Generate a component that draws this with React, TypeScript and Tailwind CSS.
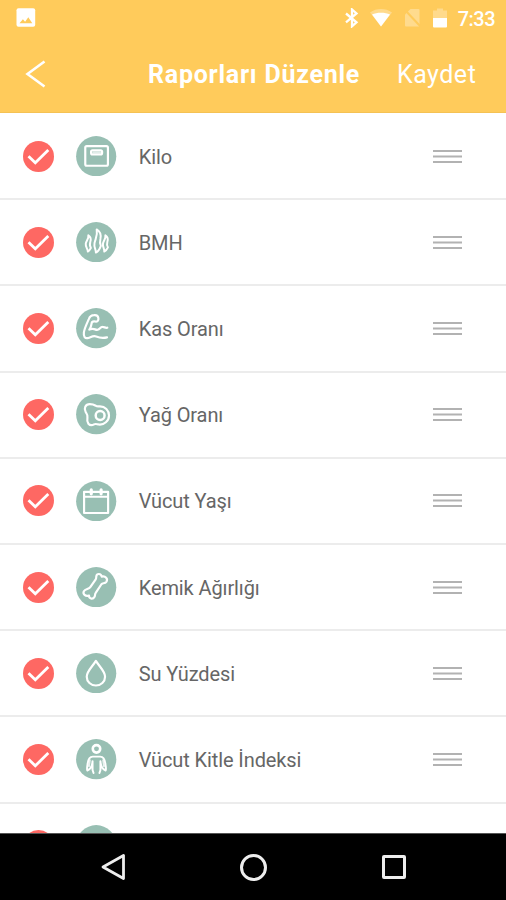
import type { ReactNode } from 'react'

type Report = {
  name: string
  icon: ReactNode
}

const reports: Report[] = [
  {
    name: 'Kilo',
    icon: (
      <>
        <rect x="9.4" y="10.2" width="23" height="20" rx="1.5" />
        <rect x="15.300" y="14.500" width="11.200" height="4.200" rx="1.5" />
        <path d="M17.500 16.600h7" strokeWidth="2" opacity=".7" />
      </>
    ),
  },
  {
    name: 'BMH',
    icon: (
      <g strokeWidth="2">
        <path d="M21 7.500c4.300 2.500 4.500 6 3.800 9.500c-.8 3.200-.6 5 .4 7.300c-1.200 3.500-3 5.800-5 6.700c0-3.500-2.300-5.500-1.400-9.700c1-4.500 3.400-7.500 2.200-13.800z" />
        <path d="M12.500 13.500c3 2 2.800 4.500 2 6.800c-.7 2.700-.5 4.500 .6 6c-1 1.800-1.800 3-3.100 3.700c.2-2.500-2.600-4.500-2.100-8c.5-3.300 3.300-5 2.600-8.500z" />
        <path d="M29.800 13.500c3 2 2.800 4.500 2 6.800c-.7 2.700-.5 4 .6 5.500c-1 2.200-2.200 3.600-3.700 4.200c.4-2.700-1.900-4.500-1.300-8c.5-3.300 3.100-5 2.400-8.500z" />
      </g>
    ),
  },
  {
    name: 'Kas Oranı',
    icon: (
      <path d="M16 14.500c2-1.700 3.500-.6 4.500-.6c1.800 0 2.400-1.900 2.200-3.700c-.3-2.400-2-3.200-4.500-2.900c-3 0-4 1-5.200 4c-2.200 5-4.500 9.500-5 13.500c-.5 4 1 6.700 4.500 5.600c3-1 5-2.600 8-1.500c3.500 1.500 6.500 2 11 .9M16.500 14c-1.500 2.500-.5 5-3 8M14.500 21.700c4-1.700 5 1 7.500 .4c2.500-.6 2.500-3 5-2.900c1.800 0 2.800 1.300 4.800 .8" />
    ),
  },
  {
    name: 'Yağ Oranı',
    icon: (
      <>
        <path d="M14 10.300c-4.500 0-6.300 4.600-4.200 8c1 1.700 2.200 2.700 1.800 5.200c-.4 2.500-.6 4.500 1 6.700c1.700 1.900 4.100 1.600 5.700 .6c1.400-.8 2.700-.2 4.500 .1c5.800 .8 10.700-3.600 10.700-9.100c0-5.200-4-9.300-9.400-9.200c-2 0-2.800 .3-4-.7c-1.700-1-3-1.600-6.100-1.600z" />
        <circle cx="24.500" cy="21.800" r="4.500" strokeWidth="2.500" />
      </>
    ),
  },
  {
    name: 'Vücut Yaşı',
    icon: (
      <>
        <path d="M8.200 11h24.400v21.500H8.200zM8.200 16h24.400" />
        <path d="M15.500 9v4M25.500 9v4" strokeWidth="3.200" />
      </>
    ),
  },
  {
    name: 'Kemik Ağırlığı',
    icon: (
      <path d="M14.500 20.500L20 12.500c.7-1 .5-2 .6-3c.5-3.200 4.800-3.200 5.500 .3c3.800-1 6.700 2.300 4.700 5.200c-1.500 2-3.800 1-5 2.500L20 26.200c-1 1.300-.3 2.500-1.300 4.200c-1.700 3-5.800 1.700-5.500-1.500c-3.600 1.200-6.700-1.500-5.200-4.200c1.500-2.700 5-1.900 6.500-4.200z" />
    ),
  },
  {
    name: 'Su Yüzdesi',
    icon: (
      <path d="M20.200 8c3.500 5.800 9.300 10.500 9.300 16c0 5.200-4.200 9-9.300 9s-9.300-3.800-9.300-9c0-5.500 5.800-10.200 9.300-16z" />
    ),
  },
  {
    name: 'Vücut Kitle İndeksi',
    icon: (
      <>
        <circle cx="20.800" cy="10" r="3.800" strokeWidth="2.600" />
        <path d="M17 17.900c-3.500 0-4.700 3-5.200 7.100c-.3 3-1 5-.3 7c3-1.200 5-4.500 5.300-9.500M24.600 17.900c3.500 0 4.700 3 5.200 7.100c.3 3 1 5 .3 7c-3-1.200-5-4.500-5.300-9.500M17 17.900h7.600M16.800 22.500V31.500l1 3M24.800 22.500V31.500l-1 3" strokeWidth="2" />
        <path d="M14 21.500l-.8 6M27.600 21.500l.8 6" strokeWidth="2" opacity=".8" />
      </>
    ),
  },
]

function StatusBar() {
  return (
    <div className="flex h-9 items-center justify-between pl-4 pr-[11px] text-white">
      <svg className="size-5" viewBox="0 0 20 20" aria-hidden="true">
        <rect x=".5" y=".2" width="18.700" height="18.500" rx="2" fill="currentColor" />
        <path d="M3.500 15.200l3.400-4 2.200 2.500 3.200-4.400 4 5.900z" fill="#ffcb5b" />
      </svg>
      <div className="flex items-center">
        <svg className="mr-[11px] h-5 w-[14px]" viewBox="0 0 14 20" fill="none" stroke="currentColor" strokeWidth="2.300" aria-hidden="true">
          <path d="M1 5.500l10.500 8.800-4.500 4V1.500l4.500 4L1 14.300" />
        </svg>
        <svg className="mr-3 h-5 w-[22px]" viewBox="0 0 22 20" fill="currentColor" aria-hidden="true">
          <path d="M0 4.500c6.500-4.600 15.500-4.600 22 0L11 18.500z" opacity=".3" />
          <path d="M2 6.500c5-2.500 13-2.500 18 0L11 18.500z" />
        </svg>
        <svg className="mr-3 h-5 w-[17px]" viewBox="0 0 17 20" aria-hidden="true">
          <path d="M6.500 1H14.500a1 1 0 0 1 1 1V18.500H2a1 1 0 0 1-1-1V6.500z" fill="#ffdb8e" />
          <path d="M.5 1.500l16 17" stroke="#ffcb5b" strokeWidth="2" />
        </svg>
        <svg className="mr-[11px] h-5 w-[14px]" viewBox="0 0 14 20" fill="currentColor" aria-hidden="true">
          <path d="M0 2.500h4V.5h6v2h4v8H0z" opacity=".3" />
          <path d="M0 10h14v8.500a1 1 0 0 1-1 1H1a1 1 0 0 1-1-1z" />
        </svg>
        <span className="pt-px text-[20px] leading-5 font-medium tracking-[-0.5px]">7:33</span>
      </div>
    </div>
  )
}

function Header() {
  return (
    <header className="h-[113px] shrink-0 border-b border-[#f5c254] bg-[#ffcb5b]">
      <StatusBar />
      <div className="flex h-[77px] items-center whitespace-nowrap text-white">
        <svg className="ml-[25px] h-7 w-[22px] -translate-y-px" viewBox="0 0 22 28" fill="none" stroke="currentColor" strokeWidth="2.600" aria-hidden="true">
          <path d="M19.500 1.500L2.500 14l17 12.500" />
        </svg>
        <h1 className="ml-[101px] w-[249px] text-[25px] font-bold tracking-[0.75px]">Raporları Düzenle</h1>
        <button className="text-[25px] tracking-[0.5px]">Kaydet</button>
      </div>
    </header>
  )
}

function ReportRow({ name, icon }: Partial<Report>) {
  return (
    <li className="flex h-[86.2px] shrink-0 items-center border-b-2 border-[#ececec] pl-[23px] pr-11">
      <svg className="size-[31px]" viewBox="0 0 31 31" fill="none" aria-hidden="true">
        <circle cx="15.500" cy="15.500" r="15.500" fill="#fe6863" />
        <path d="M5.500 15.200l6.800 6.600L25.300 9" stroke="white" strokeWidth="2.800" />
      </svg>
      <svg
        className="ml-[22.300px] size-[40.400px]"
        viewBox="0 0 41 41"
        fill="none"
        stroke="white"
        strokeWidth="2.200"
        strokeLinejoin="round"
        strokeLinecap="round"
        aria-hidden="true"
      >
        <circle cx="20.500" cy="20.500" r="20.400" fill="#98bfb3" stroke="none" />
        {icon}
      </svg>
      <span className="ml-[22px] grow pt-px text-xl tracking-[-0.1px] text-[#666666]">{name}</span>
      <svg className="h-[15px] w-[29px]" viewBox="0 0 29 15" fill="none" stroke="#b2b2b2" strokeWidth="2.200" aria-hidden="true">
        <path d="M0 2h29M0 7.500h29M0 13h29" />
      </svg>
    </li>
  )
}

function NavigationBar() {
  return (
    <nav className="flex h-[67px] shrink-0 items-center border-t border-[#555555] bg-black pl-[101px] text-[#eeeeee]">
      <svg className="h-7 w-[26px]" viewBox="0 0 26 28" fill="none" stroke="currentColor" strokeWidth="2.800" strokeLinejoin="round" aria-hidden="true">
        <path d="M22.500 2.500v23L2 14z" />
      </svg>
      <div className="ml-[113px] size-[27px] rounded-full border-[3px] border-current"></div>
      <div className="ml-[115px] size-[24px] rounded-[2px] border-[3px] border-current"></div>
    </nav>
  )
}

export default function App() {
  return (
    <div className="flex h-[900px] w-[506px] flex-col overflow-hidden bg-white font-['Roboto',sans-serif]">
      <Header />
      <ul className="flex min-h-0 grow flex-col overflow-hidden pt-px">
        {reports.map((report) => (
          <ReportRow key={report.name} {...report} />
        ))}
        {/* Next row peeks out above the navigation bar */}
        <ReportRow />
      </ul>
      <NavigationBar />
    </div>
  )
}
